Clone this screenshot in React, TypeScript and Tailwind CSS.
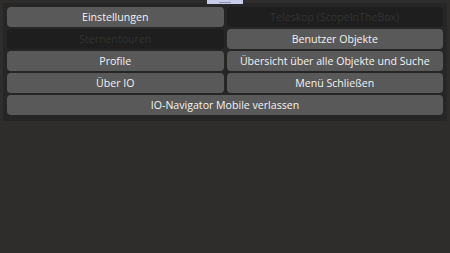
import React from "react";

const font = { fontFamily: '"Open Sans", "Noto Sans", sans-serif' };

function MenuButton({ label, disabled }: { label: string; disabled?: boolean }) {
  return (
    <button
      className={
        disabled
          ? "h-[20px] rounded-[4px] bg-[#1e1e1e] text-[#323232] text-[10.6px] leading-[20px]"
          : "h-[20px] rounded-[4px] bg-[#595959] text-[#f2f2f2] text-[10.6px] leading-[20px]"
      }
    >
      {label}
    </button>
  );
}

export default function App() {
  return (
    <div className="relative w-[450px] h-[253px] bg-[#2e2d2b] pt-[3px] pl-[3px] pr-[3px]" style={font}>
      {/* top marker */}
      <div className="absolute left-[207px] top-0 w-[36px] h-[4px] bg-[#c9cdea] flex items-center justify-center">
        <div className="w-[12px] h-px bg-[#8a8fb0]" />
      </div>

      <div className="bg-[#262626] px-[4px] pt-[4px] pb-[6px]">
        <div className="grid grid-cols-2 gap-x-[3px] gap-y-[2px]">
          <MenuButton label="Einstellungen" />
          <MenuButton label="Teleskop (ScopeInTheBox)" disabled />
          <MenuButton label="Sternentouren" disabled />
          <MenuButton label="Benutzer Objekte" />
          <MenuButton label="Profile" />
          <MenuButton label="Übersicht über alle Objekte und Suche" />
          <MenuButton label="Über IO" />
          <MenuButton label="Menü Schließen" />
          <div className="col-span-2 grid">
            <MenuButton label="IO-Navigator Mobile verlassen" />
          </div>
        </div>
      </div>
    </div>
  );
}
